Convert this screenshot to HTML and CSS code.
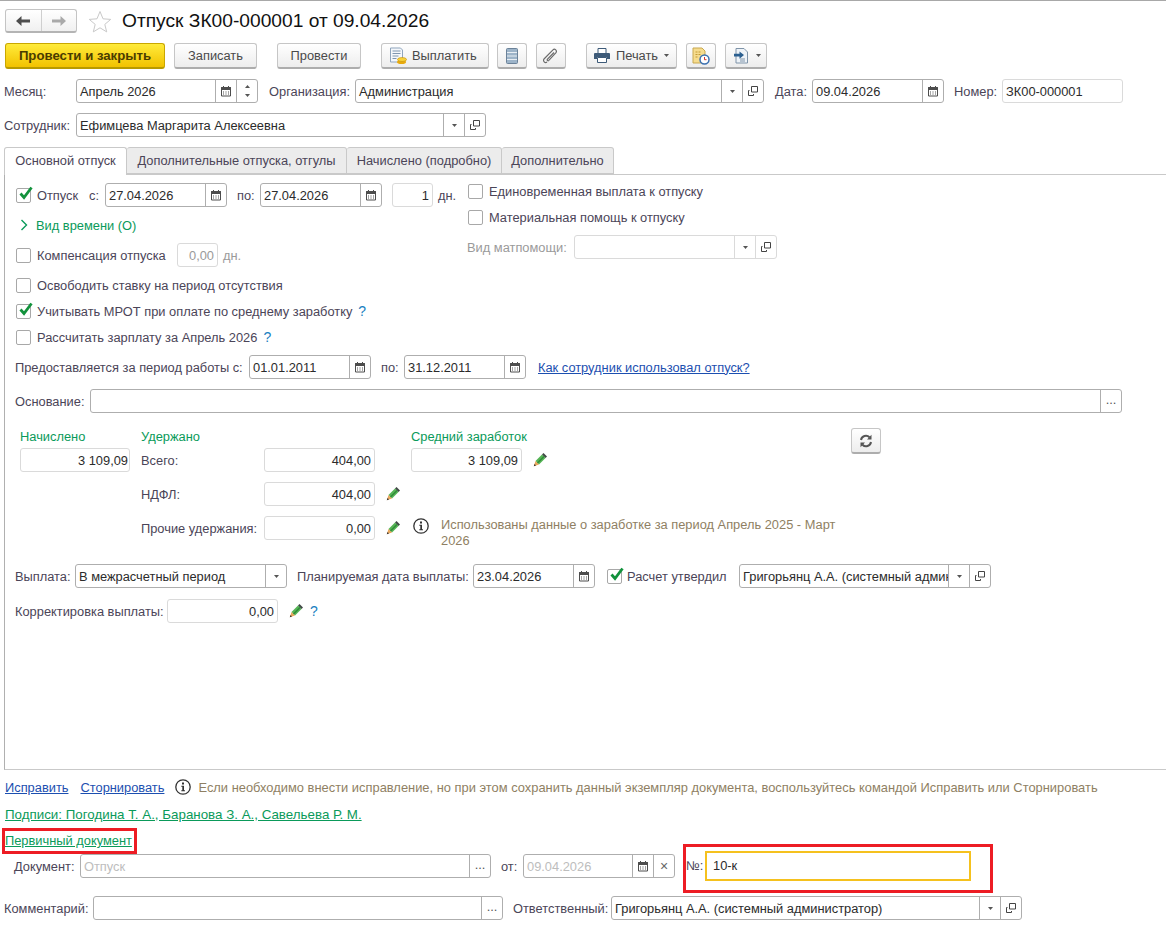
FILE: index.html
```html
<!DOCTYPE html>
<html lang="ru">
<head>
    <meta charset="UTF-8">
    <title>Отпуск ЗК00-000001 от 09.04.2026</title>
    <link rel="stylesheet" href="styles.css">
</head>
<body>
    <svg class="sprite" xmlns="http://www.w3.org/2000/svg">
        <symbol id="i-cal" viewBox="0 0 12 12">
            <path d="M1.500 2.500h9v8.500h-9z" fill="#fff" stroke="#4d4d4d"/>
            <path d="M1.500 2.500h9v2h-9z" fill="#4d4d4d" stroke="#4d4d4d"/>
            <path d="M3.500 1v2M8.500 1v2" stroke="#4d4d4d"/>
            <path d="M3 6.500h1v1H3zM5.500 6.500h1v1h-1zM8 6.500h1v1H8zM3 8.500h1v1H3zM5.500 8.500h1v1h-1zM8 8.500h1v1H8z" fill="#4d4d4d"/>
        </symbol>
        <symbol id="i-drop" viewBox="0 0 7 4"><path d="M0 0h7L3.500 4z" fill="#555"/></symbol>
        <symbol id="i-open" viewBox="0 0 12 12">
            <path d="M4.500 1.500h6v5.500h-6z" fill="none" stroke="#444"/>
            <path d="M2.500 5.500h-1v5h5v-1.500" fill="none" stroke="#444"/>
        </symbol>
        <symbol id="i-pencil" viewBox="0 0 14 14">
            <path d="M2.500 8 9 1.500 12.500 5 6 11.500z" fill="#55b455"/>
            <path d="M9 1.500 10.500 0 14 3.500 12.500 5z" fill="#3f4a45"/>
            <path d="M2.500 8 6 11.500 .8 13.200z" fill="#e9a65a"/>
            <path d="M1.500 11 3 12.500 .8 13.200z" fill="#333"/>
            <path d="M4.500 10 11 3.500" stroke="#2f8a38" stroke-width="1.200"/>
        </symbol>
        <symbol id="i-info" viewBox="0 0 16 16">
            <circle cx="8" cy="8" r="7.200" fill="none" stroke="#333" stroke-width="1.300"/>
            <path d="M7 3.500h2v2H7zM6.300 6.800h2.700v4.500h1v1H6.300v-1h1V7.800h-1z" fill="#333"/>
        </symbol>
        <symbol id="i-check" viewBox="0 0 16 16"><path d="M3.500 7.500 7 11.500 14.500 1.500" fill="none" stroke="#12923c" stroke-width="2.800"/></symbol>
        <symbol id="i-coins" viewBox="0 0 18 18">
            <path d="M1.500 1h10l2 2v12h-12z" fill="#f4f7fb" stroke="#8fa5bd"/>
            <path d="M3.500 4h8M3.500 6.500h8M3.500 9h6M3.500 11.500h4" stroke="#7f96b0"/>
            <ellipse cx="12.500" cy="15" rx="4.500" ry="2" fill="#e8a90c"/>
            <ellipse cx="13" cy="12.500" rx="4.500" ry="2" fill="#f7d23a" stroke="#c48d06" stroke-width=".6"/>
        </symbol>
        <symbol id="i-list" viewBox="0 0 12 16">
            <rect x=".5" y=".5" width="11" height="15" rx="1" fill="#9db4c9" stroke="#6b8299"/>
            <path d="M1 4.500h10M1 8h10M1 11.500h10" stroke="#e8eef4" stroke-width="1.200"/>
        </symbol>
        <symbol id="i-clip" viewBox="0 0 16 16">
            <path d="M4 14c-2 1.500-4.500-1-3-3L10 1.800c1.700-1.700 4.600.9 2.800 3L5.800 12.400c-.9.900-2.100-.2-1.300-1.200L11 4.500" fill="none" stroke="#6b6b6b" stroke-width="1.200"/>
        </symbol>
        <symbol id="i-print" viewBox="0 0 16 15">
            <path d="M4 .5h8v5H4z" fill="#fff" stroke="#3d5a78"/>
            <path d="M1 5h14a1 1 0 0 1 1 1v5h-3V9H3v2H0V6a1 1 0 0 1 1-1z" fill="#3d5a78"/>
            <path d="M3.500 9.500h9v5h-9z" fill="#fff" stroke="#3d5a78"/>
        </symbol>
        <symbol id="i-report" viewBox="0 0 18 18">
            <path d="M1 1h9l3 3v12H1z" fill="#f6dc8e" stroke="#c8a850"/>
            <path d="M3.500 5h6M3.500 7.500h5M3.500 10h3" stroke="#c39a34" stroke-dasharray="2 1"/>
            <circle cx="12.500" cy="12.500" r="4.500" fill="#fff" stroke="#3a6fb0" stroke-width="1.500"/>
            <path d="M12.500 10v2.700h2" stroke="#d0342c" fill="none"/>
        </symbol>
        <symbol id="i-export" viewBox="0 0 18 16">
            <path d="M4 .5h8l3.500 3.500v11H4z" fill="#eef3f8" stroke="#7e93a8"/>
            <path d="M11 6 6.500 2.500v2.200H1v2.800h5.500v2.200z" transform="translate(1 1)" fill="#2a5f90"/>
            <path d="M8 11h5M8 13h5" stroke="#7e93a8"/>
        </symbol>
        <symbol id="i-refresh" viewBox="0 0 14 14">
            <path d="M2 6a5 5 0 0 1 8.500-2.700" fill="none" stroke="#555" stroke-width="2"/>
            <path d="M12.500 .8v4.700H8z" fill="#555"/>
            <path d="M12 8a5 5 0 0 1-8.500 2.700" fill="none" stroke="#555" stroke-width="2"/>
            <path d="M1.500 13.200V8.500H6z" fill="#555"/>
        </symbol>
    </svg>

    <div class="title-bar">
        <div class="nav-group">
            <div class="nav-btn">
                <svg width="14" height="10" viewBox="0 0 14 10"><path d="M0 5 5.500 0v3.500H14v3H5.500V10z" fill="#4d4d4d"/></svg>
            </div>
            <div class="nav-btn">
                <svg width="14" height="10" viewBox="0 0 14 10"><path d="M14 5 8.500 0v3.500H0v3h8.500V10z" fill="#a9a9a9"/></svg>
            </div>
        </div>
        <svg class="star" width="24" height="23" viewBox="0 0 24 23"><path d="M12 1.500 15 8.800l7.700.6-5.900 5 1.900 7.500L12 17.800l-6.700 4.100 1.900-7.500-5.900-5L9 8.800z" fill="#fff" stroke="#c9c9c9"/></svg>
        <h1>Отпуск ЗК00-000001 от 09.04.2026</h1>
    </div>

    <div class="toolbar">
        <div class="btn btn-main">Провести и закрыть</div>
        <div class="btn btn-write">Записать</div>
        <div class="btn btn-post">Провести</div>
        <div class="btn btn-pay"><svg width="18" height="18"><use href="#i-coins"/></svg>Выплатить</div>
        <div class="btn btn-icon btn-list"><svg width="12" height="16"><use href="#i-list"/></svg></div>
        <div class="btn btn-icon btn-clip"><svg width="16" height="16"><use href="#i-clip"/></svg></div>
        <div class="btn btn-print"><svg width="16" height="15"><use href="#i-print"/></svg>Печать<svg class="caret" width="5" height="3"><use href="#i-drop"/></svg></div>
        <div class="btn btn-icon btn-report"><svg width="18" height="18"><use href="#i-report"/></svg></div>
        <div class="btn btn-icon btn-export"><svg width="18" height="16"><use href="#i-export"/></svg><svg class="caret" width="5" height="3"><use href="#i-drop"/></svg></div>
    </div>

    <div class="row row-month">
        <span class="lab">Месяц:</span>
        <div class="field">
            <span class="val">Апрель 2026</span>
            <span class="fbtn"><svg width="12" height="12"><use href="#i-cal"/></svg></span>
            <span class="fbtn spin">
                <svg width="5" height="3" viewBox="0 0 7 4"><path d="M0 4h7L3.500 0z" fill="#555"/></svg>
                <svg width="5" height="3"><use href="#i-drop"/></svg>
            </span>
        </div>
        <span class="lab">Организация:</span>
        <div class="field">
            <span class="val">Администрация</span>
            <span class="fbtn"><svg width="5" height="3"><use href="#i-drop"/></svg></span>
            <span class="fbtn"><svg width="12" height="12"><use href="#i-open"/></svg></span>
        </div>
        <span class="lab">Дата:</span>
        <div class="field">
            <span class="val">09.04.2026</span>
            <span class="fbtn"><svg width="12" height="12"><use href="#i-cal"/></svg></span>
        </div>
        <span class="lab lab-number">Номер:</span>
        <div class="field light"><span class="val">ЗК00-000001</span></div>
    </div>

    <div class="row row-person">
        <span class="lab">Сотрудник:</span>
        <div class="field">
            <span class="val">Ефимцева Маргарита Алексеевна</span>
            <span class="fbtn"><svg width="5" height="3"><use href="#i-drop"/></svg></span>
            <span class="fbtn"><svg width="12" height="12"><use href="#i-open"/></svg></span>
        </div>
    </div>

    <div class="tabs">
        <div class="tab tab-1 active">Основной отпуск</div>
        <div class="tab tab-2">Дополнительные отпуска, отгулы</div>
        <div class="tab tab-3">Начислено (подробно)</div>
        <div class="tab tab-4">Дополнительно</div>
    </div>

    <div class="panel">
        <div class="top-section">
            <div class="top-left">
                <div class="row row-leave">
                    <span class="chk on"><svg width="16" height="16"><use href="#i-check"/></svg></span>
                    <span class="lab">Отпуск</span>
                    <span class="lab">с:</span>
                    <div class="field">
                        <span class="val">27.04.2026</span>
                        <span class="fbtn"><svg width="12" height="12"><use href="#i-cal"/></svg></span>
                    </div>
                    <span class="lab lab-to">по:</span>
                    <div class="field">
                        <span class="val">27.04.2026</span>
                        <span class="fbtn"><svg width="12" height="12"><use href="#i-cal"/></svg></span>
                    </div>
                    <span></span>
                    <div class="field light"><span class="val num">1</span></div>
                    <span class="lab lab-days">дн.</span>
                </div>
                <div class="row row-time">
                    <svg width="8" height="12" viewBox="0 0 8 12"><path d="M1.500 1 6.500 6l-5 5" fill="none" stroke="#0a9a5a" stroke-width="1.400"/></svg>
                    <span class="green">Вид времени (О)</span>
                </div>
                <div class="row row-comp">
                    <span class="chk"></span>
                    <span class="lab">Компенсация отпуска</span>
                    <div class="field light"><span class="val num muted">0,00</span></div>
                    <span class="lab lab-days muted-lab">дн.</span>
                </div>
                <div class="row row-check row-free">
                    <span class="chk"></span>
                    <span class="lab">Освободить ставку на период отсутствия</span>
                </div>
                <div class="row row-check row-mrot">
                    <span class="chk on"><svg width="16" height="16"><use href="#i-check"/></svg></span>
                    <span class="lab">Учитывать МРОТ при оплате по среднему заработку<span class="hint">?</span></span>
                </div>
                <div class="row row-check row-mrot">
                    <span class="chk"></span>
                    <span class="lab">Рассчитать зарплату за Апрель 2026<span class="hint">?</span></span>
                </div>
            </div>
            <div class="top-right">
                <div class="line">
                    <span class="chk"></span>
                    <span class="lab">Единовременная выплата к отпуску</span>
                </div>
                <div class="line line-next">
                    <span class="chk"></span>
                    <span class="lab">Материальная помощь к отпуску</span>
                </div>
                <div class="row row-aid">
                    <span class="lab muted-lab">Вид матпомощи:</span>
                    <div class="field light">
                        <span class="val"></span>
                        <span class="fbtn"><svg width="5" height="3"><use href="#i-drop"/></svg></span>
                        <span class="fbtn"><svg width="12" height="12"><use href="#i-open"/></svg></span>
                    </div>
                </div>
            </div>
        </div>

        <div class="row row-period">
            <span class="lab">Предоставляется за период работы с:</span>
            <div class="field">
                <span class="val">01.01.2011</span>
                <span class="fbtn"><svg width="12" height="12"><use href="#i-cal"/></svg></span>
            </div>
            <span class="lab lab-to">по:</span>
            <div class="field">
                <span class="val">31.12.2011</span>
                <span class="fbtn"><svg width="12" height="12"><use href="#i-cal"/></svg></span>
            </div>
            <a class="lab link">Как сотрудник использовал отпуск?</a>
        </div>

        <div class="row row-basis">
            <span class="lab">Основание:</span>
            <div class="field">
                <span class="val"></span>
                <span class="fbtn dots">...</span>
            </div>
        </div>

        <div class="sums">
            <span class="green">Начислено</span>
            <span class="green">Удержано</span>
            <span></span>
            <span></span>
            <span class="green">Средний заработок</span>
            <div class="btn btn-icon btn-refresh"><svg width="14" height="14"><use href="#i-refresh"/></svg></div>

            <div class="field light w-sum"><span class="val num">3 109,09</span></div>
            <span class="lab">Всего:</span>
            <div class="field light"><span class="val num">404,00</span></div>
            <span></span>
            <div class="sum-avg">
                <div class="field light w-avg"><span class="val num">3 109,09</span></div>
                <svg width="14" height="14"><use href="#i-pencil"/></svg>
            </div>

            <span></span>
            <span class="lab">НДФЛ:</span>
            <div class="field light"><span class="val num">404,00</span></div>
            <svg class="pen" width="14" height="14"><use href="#i-pencil"/></svg>
            <span></span>
            <span></span>

            <span></span>
            <span class="lab">Прочие удержания:</span>
            <div class="field light"><span class="val num">0,00</span></div>
            <svg class="pen" width="14" height="14"><use href="#i-pencil"/></svg>
            <div class="sum-note">
                <svg width="16" height="16"><use href="#i-info"/></svg>
                <p>Использованы данные о заработке за период Апрель 2025 - Март 2026</p>
            </div>
        </div>

        <div class="row row-pay">
            <span class="lab">Выплата:</span>
            <div class="field">
                <span class="val">В межрасчетный период</span>
                <span class="fbtn"><svg width="5" height="3"><use href="#i-drop"/></svg></span>
            </div>
            <span class="lab lab-plan">Планируемая дата выплаты:</span>
            <div class="field">
                <span class="val">23.04.2026</span>
                <span class="fbtn"><svg width="12" height="12"><use href="#i-cal"/></svg></span>
            </div>
            <span class="chk chk-pay on"><svg width="16" height="16"><use href="#i-check"/></svg></span>
            <span class="lab lab-tight">Расчет утвердил</span>
            <div class="field">
                <span class="val">Григорьянц А.А. (системный администратор)</span>
                <span class="fbtn"><svg width="5" height="3"><use href="#i-drop"/></svg></span>
                <span class="fbtn"><svg width="12" height="12"><use href="#i-open"/></svg></span>
            </div>
        </div>

        <div class="row row-fix">
            <span class="lab">Корректировка выплаты:</span>
            <div class="field light"><span class="val num">0,00</span></div>
            <svg class="pen" width="14" height="14"><use href="#i-pencil"/></svg>
            <span class="hint hint-fix">?</span>
        </div>
    </div>

    <div class="foot-line foot-first">
        <a class="link">Исправить</a>
        <a class="link">Сторнировать</a>
        <svg width="16" height="16"><use href="#i-info"/></svg>
        <span class="note">Если необходимо внести исправление, но при этом сохранить данный экземпляр документа, воспользуйтесь командой Исправить или Сторнировать</span>
    </div>
    <div class="foot-line foot-sign">
        <a class="link green-link sign-link">Подписи: Погодина Т. А., Баранова З. А., Савельева Р. М.</a>
    </div>
    <div class="foot-line foot-sign">
        <a class="link green-link marked-link">Первичный документ</a>
    </div>

    <div class="row row-doc">
        <span class="lab">Документ:</span>
        <div class="field">
            <span class="val muted">Отпуск</span>
            <span class="fbtn dots">...</span>
        </div>
        <span class="lab">от:</span>
        <div class="field">
            <span class="val muted">09.04.2026</span>
            <span class="fbtn"><svg width="12" height="12"><use href="#i-cal"/></svg></span>
            <span class="fbtn close">×</span>
        </div>
        <div class="num-box">
            <span class="lab">№:</span>
            <div class="num-input">10-к</div>
        </div>
    </div>

    <div class="row row-comment">
        <span class="lab">Комментарий:</span>
        <div class="field">
            <span class="val"></span>
            <span class="fbtn dots">...</span>
        </div>
        <span class="lab lab-resp">Ответственный:</span>
        <div class="field">
            <span class="val">Григорьянц А.А. (системный администратор)</span>
            <span class="fbtn"><svg width="5" height="3"><use href="#i-drop"/></svg></span>
            <span class="fbtn"><svg width="12" height="12"><use href="#i-open"/></svg></span>
        </div>
    </div>
</body>
</html>
```

FILE: styles.css
```css
html, body {
    height: 100%;
}

body {
    margin: 0;
    border-top: 1px solid #a8a8a8;
    box-sizing: border-box;
    overflow: hidden;
    background: #fff;
    color: #4b4558;
    font-family: "Liberation Sans", Arial, sans-serif;
    font-size: 12.85px;
    white-space: nowrap;
}

.sprite {
    display: none;
}

svg {
    display: block;
    flex: none;
}

/* шапка */
.title-bar {
    display: flex;
    align-items: center;
    height: 24px;
    margin: 8px 0 0 5px;
}

.nav-group {
    display: flex;
    width: 72px;
    height: 24px;
    box-sizing: border-box;
    border: 1px solid #c4c4c4;
    border-bottom: 2px solid #b4b4b4;
    border-radius: 3px;
    background: linear-gradient(#fff, #f0f0f0);
}

.nav-btn {
    flex: 1;
    display: flex;
    align-items: center;
    justify-content: center;
}

.nav-btn + .nav-btn {
    border-left: 1px solid #cfcfcf;
}

.star {
    margin-left: 11px;
}

.title-bar h1 {
    margin: 0 0 0 10px;
    color: #111;
    font-size: 19.2px;
    font-weight: normal;
}

/* командная панель */
.toolbar {
    display: flex;
    height: 26px;
    margin: 10px 0 0 5px;
}

.btn {
    display: flex;
    align-items: center;
    justify-content: center;
    gap: 6px;
    height: 26px;
    box-sizing: border-box;
    border: 1px solid #c6c6c6;
    border-bottom: 2px solid #adadad;
    border-radius: 3px;
    background: linear-gradient(#fff, #ededed);
    color: #4a4a4a;
}

.btn-main {
    width: 160px;
    border-color: #c9a700;
    border-bottom-color: #b89a00;
    background: linear-gradient(#ffeb3b, #f2c200);
    color: #4a3c00;
    font-size: 13.2px;
    font-weight: bold;
}

.btn-write { width: 83px; margin-left: 9px; }
.btn-post { width: 84px; margin-left: 20px; }
.btn-list { width: 30px; margin-left: 8px; }
.btn-clip { width: 30px; margin-left: 9px; }
.btn-print { width: 91px; margin-left: 20px; }
.btn-report { width: 30px; margin-left: 9px; }
.btn-export { width: 42px; margin-left: 9px; }

.btn-pay {
    justify-content: flex-start;
    gap: 5px;
    width: 108px;
    margin-left: 20px;
    padding-left: 7px;
}

/* поля */
.row {
    display: grid;
    grid-template-rows: 24px;
    align-items: center;
    height: 24px;
}

.lab {
    padding-left: 11px;
}

.row > .lab:first-child {
    padding-left: 0;
}

.field {
    display: flex;
    height: 24px;
    box-sizing: border-box;
    border: 1px solid #aeaeae;
    border-radius: 3px;
    background: #fff;
    color: #2b2b2b;
    overflow: hidden;
}

.field.light {
    border-color: #dadada;
}

.val {
    flex: 1;
    min-width: 0;
    padding: 1px 3px 0;
    line-height: 21px;
    overflow: hidden;
}

.num {
    text-align: right;
}

.muted {
    color: #bdbdbd;
}

.field.light .muted {
    color: #9a9a9a;
}

.muted-lab {
    color: #9a9a9a;
}

.fbtn {
    flex: none;
    display: flex;
    align-items: center;
    justify-content: center;
    width: 21px;
    border-left: 1px solid #aeaeae;
    box-sizing: border-box;
}

.field.light .fbtn {
    border-color: #dadada;
}

.spin {
    flex-direction: column;
    gap: 6px;
}

.dots {
    padding-bottom: 2px;
    color: #555;
    line-height: 1;
}

.close {
    color: #666;
    font-size: 14px;
}

.row-month {
    grid-template-columns: 72px 182px 97px 409px 48px 132px 58px 121px;
    margin: 10px 0 0 4px;
}

.row-month .lab-number {
    padding-left: 10px;
}

.row-person {
    grid-template-columns: 72px 410px;
    margin: 10px 0 0 4px;
}

/* вкладки */
.tabs {
    display: flex;
    height: 27px;
    margin: 10px 0 0 4px;
    position: relative;
    z-index: 1;
}

.tab {
    box-sizing: border-box;
    height: 27px;
    border: 1px solid #c9c9c9;
    border-left: 0;
    border-radius: 3px 3px 0 0;
    background: #ececec;
    line-height: 26px;
    text-align: center;
}

.tab.active {
    height: 28px;
    border-left: 1px solid #c9c9c9;
    border-bottom: 0;
    background: #fff;
}

.tab-1 { width: 123px; }
.tab-2 { width: 220px; }
.tab-3 { width: 155px; }
.tab-4 { width: 112px; }

.panel {
    height: 596px;
    box-sizing: border-box;
    margin-left: 4px;
    padding: 8px 0 0 10px;
    border: 1px solid #c9c9c9;
    border-right: 0;
    border-left-color: #b0b0b0;
}

.top-section {
    display: flex;
}

.top-left {
    width: 453px;
}

.chk {
    display: block;
    position: relative;
    width: 15px;
    height: 15px;
    box-sizing: border-box;
    border: 1px solid #a8a8a8;
    border-radius: 2px;
    background: #fff;
}

/* галочка вылезает за рамку */
.chk svg {
    position: absolute;
    left: 0;
    top: -3px;
}

.row-leave {
    grid-template-columns: 21px 52px 16px 122px 33px 122px 10px 41px 30px;
    padding-left: 1px;
}

.row-leave .lab {
    padding-left: 0;
}

.row .lab-to {
    padding-left: 10px;
}

.row-time {
    grid-template-columns: 16px auto;
    justify-content: start;
    margin-top: 6px;
    padding-left: 5px;
}

.green {
    color: #0a9a5a;
}

.row-comp {
    grid-template-columns: 21px 140px 41px 30px;
    margin-top: 6px;
    padding-left: 1px;
}

.row-comp .lab {
    padding-left: 0;
}

.row .lab-days {
    padding-left: 5px;
}

.row-check {
    grid-template-columns: 21px auto;
    justify-content: start;
    padding-left: 1px;
}

.row-check .lab {
    padding-left: 0;
}

.row-free {
    margin-top: 6px;
}

.row-mrot {
    margin-top: 2px;
}

.hint {
    margin-left: 6px;
    color: #1a7fc1;
    font-size: 14px;
}

.row-fix .hint-fix {
    margin-left: 0;
}

.top-right {
    display: flex;
    flex-direction: column;
}

.line {
    display: flex;
    align-items: center;
    height: 16px;
}

.line .lab {
    padding-left: 6px;
}

.line-next {
    margin-top: 10px;
}

.row-aid {
    grid-template-columns: 107px 203px;
    margin: 10px 0 0 -1px;
}

.row-period {
    grid-template-columns: 234px 122px 33px 122px auto;
    justify-content: start;
    margin-top: 6px;
}

.row-period .link {
    padding-left: 12px;
}

.link {
    color: #1c4fb0;
    text-decoration: underline;
}

.row-basis {
    grid-template-columns: 75px 1032px;
    margin-top: 10px;
}

.sums {
    display: grid;
    grid-template-columns: 121px 123px 111px 36px 440px 30px;
    grid-template-rows: 20px 34px 34px 24px;
    align-items: start;
    margin: 15px 0 0 5px;
}

.sums > .green {
    line-height: 18px;
}

.sums > .lab {
    padding-left: 0;
    line-height: 26px;
}

.w-sum {
    width: 110px;
}

.w-sum .val {
    padding-right: 1px;
}

.w-avg {
    width: 111px;
}

.sum-avg {
    display: flex;
    align-items: center;
    gap: 11px;
}

.pen {
    margin: 5px 0 0 11px;
}

.btn-refresh {
    width: 30px;
}

.sums > .btn-refresh {
    grid-row: span 2;
}

.sum-note {
    display: flex;
    gap: 12px;
    margin-left: 2px;
    white-space: normal;
}

.sum-note svg {
    margin-top: 2px;
}

.sum-note p {
    width: 410px;
    margin: 1px 0 0;
    color: #8f7f63;
    line-height: 16px;
}

.row-pay {
    grid-template-columns: 60px 212px 186px 122px 32px 112px 252px;
    margin-top: 24px;
}

.row-pay .lab-plan {
    padding-left: 10px;
}

.chk-pay {
    margin-left: 12px;
}

.row .lab-tight {
    padding-left: 0;
}

.row-fix {
    grid-template-columns: 152px 111px 32px auto;
    justify-content: start;
    margin-top: 11px;
}

.row-fix .pen {
    margin: 0 0 0 11px;
}

/* низ формы */
.foot-line {
    display: flex;
    align-items: center;
    height: 16px;
    margin: 10px 0 0 5px;
}

.foot-first {
    margin-top: 9px;
}

.foot-line .link + .link {
    margin-left: 12px;
}

.foot-line svg {
    margin-left: 11px;
}

.note {
    margin-left: 7px;
    color: #8f7f63;
    font-size: 12.9px;
}

.foot-sign {
    margin-top: 11px;
}

.green-link {
    color: #0a9a5a;
}

.sign-link {
    font-size: 13.35px;
}

.marked-link {
    display: block;
    padding-right: 2px;
    line-height: 20px;
    outline: 3px solid #ed1c24;
}

.row-doc {
    grid-template-columns: 76px 411px 32px 152px 315px;
    margin: 5px 0 0 4px;
}

.row-doc > .lab,
.row-doc > .lab:first-child {
    padding-left: 10px;
}

.num-box {
    display: flex;
    align-items: flex-start;
    align-self: start;
    width: 304px;
    height: 43px;
    margin: -7px 0 0 11px;
    outline: 3px solid #ed1c24;
}

.num-box .lab {
    width: 19px;
    padding: 11px 0 0 0;
}

.num-input {
    width: 266px;
    height: 30px;
    box-sizing: border-box;
    margin-top: 4px;
    padding-left: 6px;
    border: 2px solid #f5c11e;
    color: #2b2b2b;
    line-height: 26px;
}

.row-comment {
    grid-template-columns: 89px 410px 108px 411px;
    margin: 18px 0 0 4px;
}

.row-comment .lab-resp {
    padding-left: 10px;
}
```
